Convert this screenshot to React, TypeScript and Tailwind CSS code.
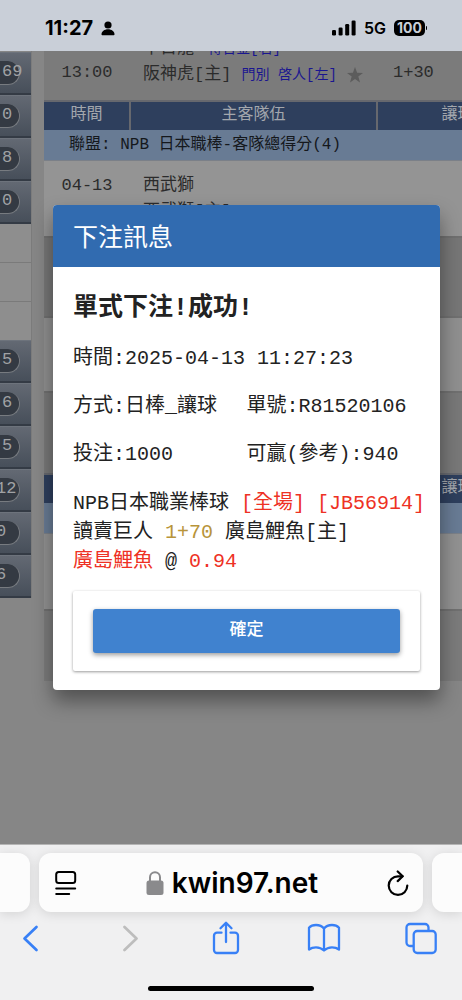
import React from "react";

const cjk = "font-['Liberation_Mono','Noto_Sans_CJK_TC',monospace]";

const topMenu = [
  { count: "69", indent: "pl-[2px]" },
  { count: "0", indent: "pl-[2px]" },
  { count: "8", indent: "pl-[2px]" },
  { count: "0", indent: "pl-[2px]" },
];

const bottomMenu = [
  { count: "5", indent: "pl-[2px]" },
  { count: "6", indent: "pl-[2px]" },
  { count: "5", indent: "pl-[2px]" },
  { count: "12", indent: "-indent-[4px]" },
  { count: "0", indent: "-indent-[4px]" },
  { count: "6", indent: "-indent-[4px]" },
];

function StatusBar() {
  return (
    <header className="flex h-[51px] shrink-0 items-center justify-between bg-[#c9cfd8] pt-[5px] pr-[35px] pl-[45px] font-['Inter',sans-serif] text-black">
      <div className="flex items-center gap-2">
        <span className="text-xl font-bold">11:27</span>
        <svg className="h-[15px] w-[14px]" viewBox="0 0 14 15" fill="currentColor">
          <circle cx="7" cy="4" r="3.6" />
          <path d="M0.5 13.2C0.5 10.4 3.400 8.200 7 8.200s6.500 2.200 6.500 5c0 .8-.5 1.100-1.200 1.100H1.700c-.7 0-1.200-.3-1.200-1.100z" />
        </svg>
      </div>
      <div className="flex items-center gap-2">
        <svg className="h-4 w-6" viewBox="0 0 24 16" fill="currentColor">
          <rect x="0" y="10" width="4" height="5.500" rx="1.300" />
          <rect x="6.600" y="7.500" width="4" height="8" rx="1.300" />
          <rect x="13.200" y="4" width="4" height="11.500" rx="1.300" />
          <rect x="19.600" y="0.500" width="4" height="15" rx="1.300" />
        </svg>
        <span className="text-base font-semibold">5G</span>
        <div className="flex items-center gap-px">
          <span className="flex h-4 w-[31px] items-center justify-center rounded-[5px] bg-black text-sm font-bold text-[#c9cfd8]">
            100
          </span>
          <span className="h-1 w-px rounded-r bg-black" />
        </div>
      </div>
    </header>
  );
}

function MenuItem({ count, indent }: { count: string; indent: string }) {
  return (
    <a
      href="#"
      className="flex h-[43px] items-center border-t border-b-2 border-t-[#6d737c] border-b-[#343b45] bg-linear-to-b from-[#636973] to-[#474f5a]"
    >
      <span
        className={`h-6 w-5 rounded-r-full border-r border-b border-[#777b80] bg-[#343a43] text-[17px] leading-[22px] whitespace-nowrap text-[#a0a2a5] ${indent}`}
      >
        {count}
      </span>
    </a>
  );
}

function SideMenu() {
  return (
    <nav className="w-8 shrink-0 self-start border-r border-[#7c7c7c] pt-px">
      {topMenu.map((item, i) => (
        <MenuItem key={i} {...item} />
      ))}
      <div className="h-[39px] border-b border-[#7a7a7a] bg-[#8e8e8e]" />
      <div className="h-[39px] border-b border-[#7a7a7a] bg-[#8e8e8e]" />
      <div className="h-[38px] bg-[#8e8e8e]" />
      {bottomMenu.map((item, i) => (
        <MenuItem key={i} {...item} />
      ))}
    </nav>
  );
}

function Columns() {
  return (
    <colgroup>
      <col className="w-[86px]" />
      <col className="w-[247px]" />
      <col className="w-[160px]" />
    </colgroup>
  );
}

function TableHead({ league }: { league: string }) {
  return (
    <thead className="text-base leading-6">
      <tr className="h-[29px] border-t-2 border-[#66686e] bg-[#2e3f5d] text-[#a3a7ad]">
        <th className="border-r-2 border-[#66686e] p-0 pb-0.5 font-normal">時間</th>
        <th className="border-r-2 border-[#66686e] p-0 pb-0.5 font-normal">主客隊伍</th>
        <th className="p-0 pb-0.5 font-normal">讓球</th>
      </tr>
      <tr className="h-[30px] border-b border-[#7b8088] bg-[#687b94] text-[#15181c]">
        <th colSpan={3} className="p-0 pl-[25px] text-left font-normal">
          {league}
        </th>
      </tr>
    </thead>
  );
}

function OddsBoard() {
  return (
    <main className="ml-3 min-w-0 flex-1 overflow-hidden text-[17px] text-[#2b2b2b]">
      <div className="h-[49px] overflow-hidden bg-[#7b7b7b]">
        <table className="-mt-[14px] w-[493px] table-fixed border-collapse">
          <Columns />
          <tbody className="align-top leading-6 whitespace-nowrap">
            <tr className="h-[26px]">
              <td />
              <td className="p-0 pl-[13px]">
                中日龍 <span className="ml-1 text-sm text-[#1a1690]">博合金[右]</span>
              </td>
              <td />
            </tr>
            <tr className="h-7">
              <td className="p-0 text-center leading-5">13:00</td>
              <td className="p-0 pl-[13px]">
                阪神虎[主]{" "}
                <span className="text-sm text-[#1a1690]">門別 啓人[左]</span>
                <svg className="ml-2.5 inline h-4 w-4" viewBox="0 0 16 16" fill="#5c5c5c">
                  <path d="M8 0l2.100 5.700 5.900.2-4.700 3.600 1.700 5.900L8 12l-5 3.400 1.700-5.900L0 5.900l5.900-.2z" />
                </svg>
              </td>
              <td className="p-0 pl-4 leading-5">1+30</td>
            </tr>
          </tbody>
        </table>
      </div>

      <table className="w-[493px] table-fixed border-collapse">
        <Columns />
        <TableHead league="聯盟: NPB 日本職棒-客隊總得分(4)" />
        <tbody>
          <tr className="h-[77px] border-b-2 border-[#707070] bg-[#949494] align-top leading-[26px]">
            <td className="p-0 pt-3 text-center">
              04-13
              <br />
              12:00
            </td>
            <td className="p-0 pt-3 pl-[13px]">
              西武獅
              <br />
              西武獅[主]
            </td>
            <td />
          </tr>
        </tbody>
      </table>

      <div className="h-[78px] bg-[#767676]" />
      <div className="h-[77px] border-y-2 border-[#707070] bg-[#8f8f8f]" />
      <div className="h-20 bg-[#787878]" />

      <table className="w-[493px] table-fixed border-collapse">
        <Columns />
        <TableHead league="聯盟: NPB 日本職棒" />
        <tbody>
          <tr className="h-[77px] border-b-2 border-[#707070] bg-[#919191]">
            <td />
            <td />
            <td />
          </tr>
        </tbody>
      </table>
      <div className="h-[70px] bg-[#7b7b7b]" />
    </main>
  );
}

function BetDialog() {
  return (
    <section
      role="dialog"
      aria-labelledby="bet-title"
      className="absolute top-[154px] right-[22px] left-[53px] overflow-hidden rounded bg-white text-xl leading-7 whitespace-nowrap text-[#222] shadow-[0_11px_20px_rgba(0,0,0,0.4)]"
    >
      <h2
        id="bet-title"
        className="bg-[#316bb0] px-5 pt-5 pb-3 text-[25px] leading-[30px] text-white"
      >
        下注訊息
      </h2>
      <div className="px-5 pt-7 pb-[19px]">
        <h3 className="mb-[22px] text-[25px] leading-7 font-bold">單式下注!成功!</h3>
        <p>時間:2025-04-13 11:27:23</p>
        <div className="my-5 grid grid-cols-2 gap-y-5">
          <p>方式:日棒_讓球</p>
          <p>單號:R81520106</p>
          <p>投注:1000</p>
          <p>可贏(參考):940</p>
        </div>
        <div className="leading-[29px]">
          <p>
            NPB日本職業棒球 <span className="text-[#ee3124]">[全場] [JB56914]</span>
          </p>
          <p>
            讀賣巨人 <span className="text-[#b8943a]">1+70</span> 廣島鯉魚[主]
          </p>
          <p>
            <span className="text-[#ee3124]">廣島鯉魚</span> @{" "}
            <span className="text-[#ee3124]">0.94</span>
          </p>
        </div>
        <div className="mt-[15px] rounded-xs bg-white px-5 py-[18px] shadow-[0_1px_3px_rgba(0,0,0,0.4)]">
          <button
            type="button"
            className="h-11 w-full rounded-[3px] bg-[#4082cf] text-[17px] font-medium text-white shadow-[0_2px_5px_rgba(0,0,0,0.4)]"
          >
            確定
          </button>
        </div>
      </div>
    </section>
  );
}

function BrowserBar() {
  return (
    <footer className="flex h-[156px] shrink-0 flex-col overflow-hidden border-t border-[#b5b5b5] bg-[#f0f0f1] pt-2">
      <div className="flex h-[59px] gap-[9px]">
        <div className="w-[30px] rounded-r-xl bg-[#fcfcfc] shadow-[0_2px_12px_rgba(0,0,0,0.12)]" />
        <div className="flex flex-1 items-center justify-between rounded-xl bg-[#fcfcfc] pr-3.5 pl-4 shadow-[0_2px_12px_rgba(0,0,0,0.12)]">
          <button type="button" aria-label="Page menu">
            <svg className="h-[26px] w-[22px]" viewBox="0 0 22 26" fill="none" stroke="#000" strokeWidth="2" strokeLinecap="round">
              <rect x="1.200" y="2" width="19" height="11" rx="2.500" />
              <path d="M1.200 18.500h19M1.200 24h13" />
            </svg>
          </button>
          <div className="flex items-center gap-2">
            <svg className="h-6 w-[18px]" viewBox="0 0 18 24" fill="none">
              <rect x="0.500" y="9.500" width="17" height="14.500" rx="2.500" fill="#8a8a8c" />
              <path d="M4 10.500V6.300a5 5 0 0 1 10 0v4.200" stroke="#8a8a8c" strokeWidth="2" />
            </svg>
            <span className="font-['Inter',sans-serif] text-[28px] font-semibold text-black">
              kwin97.net
            </span>
          </div>
          <button type="button" aria-label="Reload">
            <svg className="h-[26px] w-[22px]" viewBox="0 0 22 26" fill="none" stroke="#000" strokeWidth="2.200" strokeLinecap="round" strokeLinejoin="round">
              <path d="M15.500 6.300H11a9.300 9.300 0 1 0 9.300 9.300" />
              <path d="M10.700 1.500l5 4.800-5 4.800" />
            </svg>
          </button>
        </div>
        <div className="w-[30px] rounded-l-xl bg-[#fcfcfc] shadow-[0_2px_12px_rgba(0,0,0,0.12)]" />
      </div>

      <div className="mt-2 flex h-9 items-center justify-between pr-6 pl-3.5 text-[#3880f6]">
        <button type="button" aria-label="Back" className="flex w-[34px] justify-center">
          <svg className="h-7 w-[18px]" viewBox="0 0 18 28" fill="none" stroke="currentColor" strokeWidth="2.700" strokeLinecap="round" strokeLinejoin="round">
            <path d="M14.500 3L2.500 14.500l12 11.500" />
          </svg>
        </button>
        <button type="button" aria-label="Forward" className="flex w-[34px] justify-center text-[#bdbdbd]">
          <svg className="h-7 w-[18px]" viewBox="0 0 18 28" fill="none" stroke="currentColor" strokeWidth="2.700" strokeLinecap="round" strokeLinejoin="round">
            <path d="M4.500 3l12 11.500-12 11.500" />
          </svg>
        </button>
        <button type="button" aria-label="Share" className="flex w-[34px] justify-center">
          <svg className="h-[34px] w-7" viewBox="0 0 28 34" fill="none" stroke="currentColor" strokeWidth="2.300" strokeLinecap="round" strokeLinejoin="round">
            <path d="M9.500 11.700H5a3 3 0 0 0-3 3V29a3 3 0 0 0 3 3h18a3 3 0 0 0 3-3V14.700a3 3 0 0 0-3-3h-4.500" />
            <path d="M14 21V2M8.500 7.300L14 1.800l5.500 5.500" />
          </svg>
        </button>
        <button type="button" aria-label="Bookmarks" className="flex w-[34px] justify-center">
          <svg className="h-[30px] w-[34px]" viewBox="0 0 34 30" fill="none" stroke="currentColor" strokeWidth="2.300" strokeLinejoin="round">
            <path d="M17 5.500C15 3 12.200 2 9 2 6 2 3.600 3 2 4.800V26.500C4 25 6.400 24.300 9 24.300c3.200 0 6 1.200 8 3.200 2-2 4.800-3.200 8-3.200 2.600 0 5 .7 7 2.200V4.800C30.400 3 28 2 25 2c-3.200 0-6 1-8 3.500zM17 5.500v22" />
          </svg>
        </button>
        <button type="button" aria-label="Tabs" className="flex w-[34px] justify-center">
          <svg className="h-[33px] w-8" viewBox="0 0 32 33" fill="none" stroke="currentColor" strokeWidth="2.300">
            <path d="M8.500 24H5a3.500 3.500 0 0 1-3.500-3.500v-15A3.500 3.500 0 0 1 5 2h15a3.500 3.500 0 0 1 3.500 3.500v3.300" />
            <rect x="8.700" y="9" width="22" height="22" rx="3.500" />
          </svg>
        </button>
      </div>
      <div className="mx-auto mt-[30px] h-[5px] w-[166px] rounded-full bg-black" />
    </footer>
  );
}

export default function App() {
  return (
    <div className={`flex min-h-screen flex-col overflow-hidden ${cjk}`}>
      <StatusBar />
      <div className="relative flex flex-1 bg-[#868686]">
        <SideMenu />
        <OddsBoard />
        <BetDialog />
      </div>
      <BrowserBar />
    </div>
  );
}
